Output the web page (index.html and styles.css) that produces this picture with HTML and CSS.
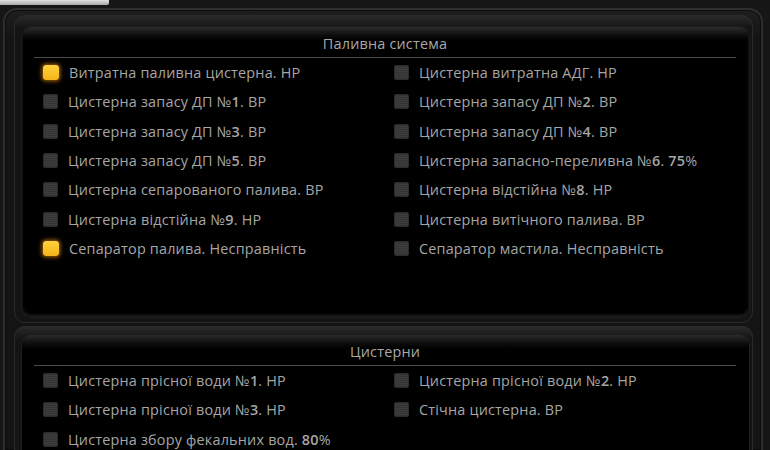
FILE: index.html
```html
<!DOCTYPE html>
<html lang="uk">
<head>
<meta charset="utf-8">
<link rel="stylesheet" href="styles.css">
</head>
<body>
<div class="tab"></div>
<div class="frame">
  <section class="section">
    <div class="panel panel-1">
      <div class="title">Паливна система</div>
      <div class="grid">
        <div class="item"><span class="led on"></span><span class="lbl">Витратна паливна цистерна. НР</span></div>
        <div class="item"><span class="led"></span><span class="lbl">Цистерна витратна АДГ. НР</span></div>
        <div class="item"><span class="led"></span><span class="lbl">Цистерна запасу ДП №<b>1</b>. ВР</span></div>
        <div class="item"><span class="led"></span><span class="lbl">Цистерна запасу ДП №<b>2</b>. ВР</span></div>
        <div class="item"><span class="led"></span><span class="lbl">Цистерна запасу ДП №<b>3</b>. ВР</span></div>
        <div class="item"><span class="led"></span><span class="lbl">Цистерна запасу ДП №<b>4</b>. ВР</span></div>
        <div class="item"><span class="led"></span><span class="lbl">Цистерна запасу ДП №<b>5</b>. ВР</span></div>
        <div class="item"><span class="led"></span><span class="lbl">Цистерна запасно-переливна №<b>6</b>. <b>75</b>%</span></div>
        <div class="item"><span class="led"></span><span class="lbl">Цистерна сепарованого палива. ВР</span></div>
        <div class="item"><span class="led"></span><span class="lbl">Цистерна відстійна №<b>8</b>. НР</span></div>
        <div class="item"><span class="led"></span><span class="lbl">Цистерна відстійна №<b>9</b>. НР</span></div>
        <div class="item"><span class="led"></span><span class="lbl">Цистерна витічного палива. ВР</span></div>
        <div class="item"><span class="led on"></span><span class="lbl">Сепаратор палива. Несправність</span></div>
        <div class="item"><span class="led"></span><span class="lbl">Сепаратор мастила. Несправність</span></div>
      </div>
    </div>
  </section>
  <section class="section section-2">
    <div class="panel panel-2">
      <div class="title">Цистерни</div>
      <div class="grid">
        <div class="item"><span class="led"></span><span class="lbl">Цистерна прісної води №<b>1</b>. НР</span></div>
        <div class="item"><span class="led"></span><span class="lbl">Цистерна прісної води №<b>2</b>. НР</span></div>
        <div class="item"><span class="led"></span><span class="lbl">Цистерна прісної води №<b>3</b>. НР</span></div>
        <div class="item"><span class="led"></span><span class="lbl">Стічна цистерна. ВР</span></div>
        <div class="item"><span class="led"></span><span class="lbl">Цистерна збору фекальних вод. <b>80</b>%</span></div>
      </div>
    </div>
  </section>
</div>
</body>
</html>
```

FILE: styles.css
```css
html, body {
  margin: 0;
  padding: 0;
}
body {
  width: 770px;
  height: 450px;
  overflow: hidden;
  background: #161616;
  font-family: "Open Sans", "Noto Sans", sans-serif;
}
.tab {
  width: 109px;
  height: 5px;
  background: linear-gradient(#e2e2e2, #a8a8a8);
  border-radius: 0 0 2px 0;
}
.frame {
  box-sizing: border-box;
  margin: 3px 7px 0 3px;
  height: 442px;
  border: 2px solid #2e2e2e;
  border-bottom: 0;
  border-radius: 14px 14px 0 0;
  background: linear-gradient(#1e1e1e, #141414 30px);
  padding-top: 5px;
  box-shadow: inset 0 0 0 1px #0c0c0c;
  overflow: hidden;
}
.section {
  margin: 0 8px 0 9px;
  padding: 11px 3px 5px 7px;
  border: 1px solid #2a2a2a;
  border-radius: 11px;
  background: linear-gradient(#2a2a2a, #141414 12px, #141414);
}
.section-2 {
  margin-top: 3px;
  padding-top: 8px;
  padding-bottom: 0;
  border-bottom: 0;
  border-radius: 11px 11px 0 0;
}
.panel {
  border-radius: 9px;
  background: linear-gradient(#2b2b2b 0, #0b0b0b 9px, #000 14px);
  box-shadow: 0 0 0 1px #1d1d1d, inset 0 -2px 3px #1e1e1e;
}
.panel-1 {
  height: 290px;
}
.panel-2 {
  height: 116px;
  border-radius: 9px 9px 0 0;
  box-shadow: 0 0 0 1px #1d1d1d;
}
.title {
  margin: 0 13px 0 12px;
  padding: 8px 0 5px;
  line-height: 17px;
  font-size: 14.4px;
  letter-spacing: 0.2px;
  color: #a9a9a9;
  text-align: center;
  border-bottom: 1px solid #4c4c4c;
}
.panel-2 .title {
  padding-top: 8px;
}
.grid {
  display: grid;
  grid-template-columns: 351px 1fr;
  grid-auto-rows: 29.33px;
  padding-left: 21px;
}
.item {
  display: flex;
  align-items: center;
  gap: 10px;
  white-space: nowrap;
}
.led {
  flex: none;
  width: 15px;
  height: 15px;
  border-radius: 3px;
  background: repeating-linear-gradient(#3d3d3d 0 1px, #353535 1px 2px);
  box-shadow: inset 0 0 0 1px #2c2c2c;
}
.led.on {
  width: 16px;
  background: linear-gradient(#ffd23a, #f6b41c);
  box-shadow: 0 0 4px 1px rgba(230, 140, 10, 0.75);
}
.lbl {
  font-size: 14.4px;
  letter-spacing: 0.2px;
  color: #a6a6a6;
}
.lbl b {
  font-weight: 600;
}
```
